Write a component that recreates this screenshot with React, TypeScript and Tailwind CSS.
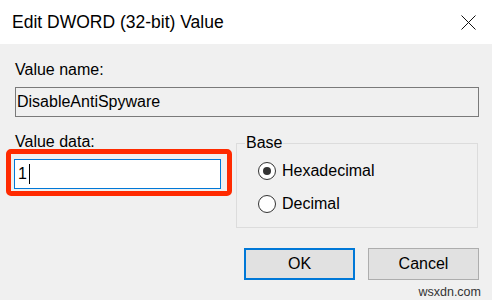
export default function App() {
  return (
    <div className="h-[300px] w-[492px] overflow-hidden bg-[#f0f0f0] font-['Liberation_Sans',Arial,sans-serif] text-black">
      {/* title bar */}
      <div className="flex h-[44px] items-center justify-between bg-white pl-[12px] pr-[16px]">
        <span className="text-[17.5px] leading-[22px]">Edit DWORD (32-bit) Value</span>
        <svg width="15" height="15" viewBox="0 0 15 15" className="text-[#111]">
          <path d="M0.5 0.5 L14.5 14.5 M14.5 0.5 L0.5 14.5" stroke="currentColor" strokeWidth="1" fill="none" />
        </svg>
      </div>

      {/* value name */}
      <div className="pl-[15px] pr-[13px]">
        <div className="mt-[16px] text-[16px] leading-[20px]">Value name:</div>
        <div className="mt-[7px] flex h-[30px] items-center border border-[#7a7a7a] bg-[#f0f0f0] pl-[1px] text-[16px] leading-[20px]">
          DisableAntiSpyware
        </div>
      </div>

      {/* value data + base */}
      <div className="mt-[15px] flex gap-[4px] pl-[6px] pr-[14px]">
        <div className="w-[226px]">
          <div className="h-[17px] pl-[9px] text-[16px] leading-[20px]">Value data:</div>
          <div className="rounded-[5px] border-[5px] border-[#ff2a00] pb-[2px] pl-[3px] pr-[6px] pt-[5px]">
            <div className="flex h-[30px] items-center border border-[#0078d7] bg-white pl-[3px] text-[16px] leading-[20px]">
              <span>1</span>
              <span className="ml-[2px] h-[20px] w-px bg-black" />
            </div>
          </div>
        </div>

        <fieldset className="mt-[1px] flex-1 border border-[#dcdcdc] pb-[13px] pl-[8px]">
          <legend className="px-px text-[16px] leading-[20px]">Base</legend>
          <div className="ml-[13px] mt-[8px] flex h-[20px] items-center gap-[6px]">
            <span className="flex h-[18px] w-[18px] items-center justify-center rounded-full border border-[#333] bg-white">
              <span className="h-[8px] w-[8px] rounded-full bg-[#333]" />
            </span>
            <span className="text-[16px] leading-[20px]">Hexadecimal</span>
          </div>
          <div className="ml-[13px] mt-[13px] flex h-[20px] items-center gap-[6px]">
            <span className="h-[18px] w-[18px] rounded-full border border-[#333] bg-white" />
            <span className="text-[16px] leading-[20px]">Decimal</span>
          </div>
        </fieldset>
      </div>

      {/* buttons */}
      <div className="mt-[20px] flex justify-end gap-[13px] pr-[13px]">
        <button className="h-[32px] w-[111px] border-2 border-[#0078d7] bg-[#e1e1e1] text-[16px]">OK</button>
        <button className="h-[32px] w-[111px] border border-[#adadad] bg-[#e1e1e1] text-[16px]">Cancel</button>
      </div>

      <div className="mt-[5px] pr-[11px] text-right text-[12.5px] leading-[14px] text-[#333]">wsxdn.com</div>
    </div>
  );
}
